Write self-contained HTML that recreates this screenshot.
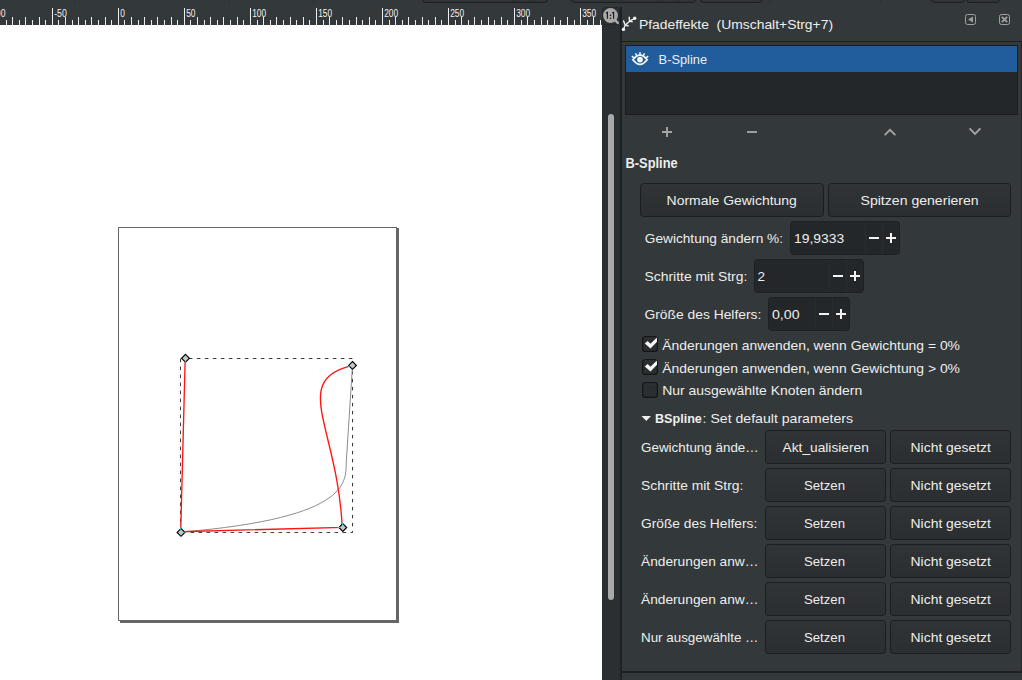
<!DOCTYPE html><html><head><meta charset="utf-8"><style>html,body{margin:0;padding:0;width:1022px;height:680px;overflow:hidden;background:#33383a}svg{display:block}text{font-family:"Liberation Sans",sans-serif}</style></head><body><svg width="1022" height="680" viewBox="0 0 1022 680"><defs><linearGradient id="bg" x1="0" y1="0" x2="0" y2="1"><stop offset="0" stop-color="#303436"/><stop offset="1" stop-color="#2a2e30"/></linearGradient><linearGradient id="cb" x1="0" y1="0" x2="0" y2="1"><stop offset="0" stop-color="#2f3335"/><stop offset="1" stop-color="#272b2d"/></linearGradient></defs><rect x="0" y="0" width="1022" height="680" fill="#33383a"/>
<rect x="0" y="25" width="602" height="655" fill="#ffffff"/>
<rect x="120" y="228" width="279" height="395" fill="#666666"/>
<rect x="118.5" y="227.5" width="278" height="393" fill="#ffffff" stroke="#666666" stroke-width="1"/>
<rect x="180.5" y="358.5" width="172" height="174" fill="none" stroke="#3a3a3a" stroke-width="1" stroke-dasharray="3.5 4.5" stroke-dashoffset="-0.4"/>
<path d="M352.5 365.4 L346.4 460 C345.1 480.2 355.9 517.5 181 532.1" fill="none" stroke="#8c8c8c" stroke-width="1"/>
<path d="M185.2 358.3 L180.7 531.7 L342.2 527.3 C337.6 426.3 289.7 380.6 352.5 365.4" fill="none" stroke="#ff1414" stroke-width="1.35"/>
<path d="M185.5 354.40000000000003 L189.4 358.3 L185.5 362.2 L181.6 358.3 Z" fill="#c6c6c6" stroke="#000" stroke-width="1.15"/>
<path d="M185.29 361.09 L185.13 363.29" stroke="#10d8e0" stroke-width="1.1"/>
<path d="M352.5 361.5 L356.4 365.4 L352.5 369.29999999999995 L348.6 365.4 Z" fill="#c6c6c6" stroke="#000" stroke-width="1.15"/>
<path d="M349.77 366.01 L347.62 366.50" stroke="#10d8e0" stroke-width="1.1"/>
<path d="M342.8 523.6 L346.7 527.5 L342.8 531.4 L338.90000000000003 527.5 Z" fill="#c6c6c6" stroke="#000" stroke-width="1.15"/>
<path d="M340.00 527.50 L337.80 527.50" stroke="#10d8e0" stroke-width="1.1"/>
<path d="M342.52 524.71 L342.30 522.52" stroke="#10d8e0" stroke-width="1.1"/>
<path d="M181 528.5 L184.9 532.4 L181 536.3 L177.1 532.4 Z" fill="#c6c6c6" stroke="#000" stroke-width="1.15"/>
<path d="M180.72 529.61 L180.50 527.42" stroke="#10d8e0" stroke-width="1.1"/>
<path d="M183.79 532.19 L185.99 532.03" stroke="#10d8e0" stroke-width="1.1"/>
<rect x="422.5" y="-6.5" width="125" height="9" rx="3" fill="#2f3335" stroke="#1d2022"/>
<rect x="571.5" y="-6.5" width="124" height="9" rx="3" fill="#2f3335" stroke="#1d2022"/>
<rect x="700.5" y="-6.5" width="62" height="9" rx="3" fill="#2f3335" stroke="#1d2022"/>
<rect x="931.5" y="-6.5" width="33" height="9" rx="3" fill="#2f3335" stroke="#1d2022"/>
<rect x="966.5" y="-6.5" width="33" height="9" rx="3" fill="#2f3335" stroke="#1d2022"/>
<path d="M74.5 0V3M229.5 0V3M313.5 0V3M769.5 0V3M880.5 0V3" stroke="#2c3032"/><path d="M513.5 0V2M530.5 0V2M661.5 0V2M678.5 0V2" stroke="#24282a"/>
<rect x="0" y="3" width="602" height="22" fill="#33383a"/>
<text x="-11.8" y="17" font-size="10.2" textLength="17.25" lengthAdjust="spacingAndGlyphs" fill="#f2f2f2" >-100</text>
<text x="54.2" y="17" font-size="10.2" textLength="12.600000000000001" lengthAdjust="spacingAndGlyphs" fill="#f2f2f2" >-50</text>
<text x="120.2" y="17" font-size="10.2" textLength="4.65" lengthAdjust="spacingAndGlyphs" fill="#f2f2f2" >0</text>
<text x="186.2" y="17" font-size="10.2" textLength="9.3" lengthAdjust="spacingAndGlyphs" fill="#f2f2f2" >50</text>
<text x="252.2" y="17" font-size="10.2" textLength="13.950000000000001" lengthAdjust="spacingAndGlyphs" fill="#f2f2f2" >100</text>
<text x="318.2" y="17" font-size="10.2" textLength="13.950000000000001" lengthAdjust="spacingAndGlyphs" fill="#f2f2f2" >150</text>
<text x="384.2" y="17" font-size="10.2" textLength="13.950000000000001" lengthAdjust="spacingAndGlyphs" fill="#f2f2f2" >200</text>
<text x="450.2" y="17" font-size="10.2" textLength="13.950000000000001" lengthAdjust="spacingAndGlyphs" fill="#f2f2f2" >250</text>
<text x="516.2" y="17" font-size="10.2" textLength="13.950000000000001" lengthAdjust="spacingAndGlyphs" fill="#f2f2f2" >300</text>
<text x="582.2" y="17" font-size="10.2" textLength="13.950000000000001" lengthAdjust="spacingAndGlyphs" fill="#f2f2f2" >350</text>
<path d="M-13.5 8V25 M-7.5 20V25 M-0.5 17V25 M6.5 20V25 M12.5 17V25 M19.5 20V25 M25.5 17V25 M32.5 20V25 M39.5 17V25 M45.5 20V25 M52.5 8V25 M58.5 20V25 M65.5 17V25 M72.5 20V25 M78.5 17V25 M85.5 20V25 M91.5 17V25 M98.5 20V25 M105.5 17V25 M111.5 20V25 M118.5 8V25 M124.5 20V25 M131.5 17V25 M138.5 20V25 M144.5 17V25 M151.5 20V25 M157.5 17V25 M164.5 20V25 M171.5 17V25 M177.5 20V25 M184.5 8V25 M190.5 20V25 M197.5 17V25 M204.5 20V25 M210.5 17V25 M217.5 20V25 M223.5 17V25 M230.5 20V25 M237.5 17V25 M243.5 20V25 M250.5 8V25 M257.5 20V25 M263.5 17V25 M270.5 20V25 M276.5 17V25 M283.5 20V25 M290.5 17V25 M296.5 20V25 M303.5 17V25 M309.5 20V25 M316.5 8V25 M323.5 20V25 M329.5 17V25 M336.5 20V25 M342.5 17V25 M349.5 20V25 M356.5 17V25 M362.5 20V25 M369.5 17V25 M375.5 20V25 M382.5 8V25 M389.5 20V25 M395.5 17V25 M402.5 20V25 M408.5 17V25 M415.5 20V25 M422.5 17V25 M428.5 20V25 M435.5 17V25 M441.5 20V25 M448.5 8V25 M455.5 20V25 M461.5 17V25 M468.5 20V25 M474.5 17V25 M481.5 20V25 M488.5 17V25 M494.5 20V25 M501.5 17V25 M507.5 20V25 M514.5 8V25 M521.5 20V25 M527.5 17V25 M534.5 20V25 M541.5 17V25 M547.5 20V25 M554.5 17V25 M560.5 20V25 M567.5 17V25 M574.5 20V25 M580.5 8V25 M587.5 20V25 M593.5 17V25 M600.5 20V25" stroke="#eeeeec" stroke-width="1"/>
<rect x="602" y="25" width="18" height="655" fill="#2b2f31"/>
<rect x="602" y="25" width="1" height="655" fill="#262a2c"/>
<rect x="608" y="114" width="6" height="486" rx="3" fill="#a8aaaa"/>
<rect x="602.5" y="7.5" width="17" height="17" rx="2" fill="#2b2f31" stroke="#24282a"/>
<circle cx="610.5" cy="15.5" r="7.4" fill="#a9a9a9"/>
<path d="M615 20 L617.8 22.8" stroke="#a9a9a9" stroke-width="2.6" stroke-linecap="round"/>
<path d="M606 12.9 L607.4 12.3 V18.7 M612.2 12.9 L613.6 12.3 V18.7" stroke="#141414" stroke-width="1.1" fill="none"/>
<rect x="609.9" y="14.7" width="1.3" height="1.3" fill="#141414"/><rect x="609.9" y="17.6" width="1.3" height="1.3" fill="#141414"/>
<rect x="620" y="7" width="2" height="673" fill="#1e2123"/>
<rect x="622" y="41" width="400" height="1" fill="#1d2022"/>
<rect x="1021" y="42" width="1" height="629" fill="#24282a"/>
<rect x="622" y="671" width="400" height="2" fill="#1d2022"/>
<g stroke="#f2f2f2" fill="none" stroke-linecap="round"><path d="M623.4 29.4 Q625.5 22.5 634.7 18.3" stroke-width="1.3"/><path d="M623.6 21 L625.2 25.2 L628.2 25.8 M629.2 17.3 L629.6 21 L632.2 21.8" stroke-width="1.4"/></g><circle cx="623.4" cy="29.4" r="1.7" fill="#f2f2f2"/><circle cx="634.7" cy="18.3" r="1.7" fill="#f2f2f2"/>
<text x="639" y="29" font-size="13.5" textLength="194" lengthAdjust="spacingAndGlyphs" fill="#eeeeec" >Pfadeffekte  (Umschalt+Strg+7)</text>
<rect x="965.5" y="14.5" width="10" height="10" rx="2" fill="none" stroke="#a0a0a0" stroke-width="1"/>
<path d="M968 19.5 L973 16.5 L973 22.5 Z" fill="#a0a0a0"/>
<rect x="999.5" y="14.5" width="10" height="10" rx="2" fill="none" stroke="#a0a0a0" stroke-width="1"/>
<path d="M1001.8 16.8 L1007.2 22.2 M1007.2 16.8 L1001.8 22.2" stroke="#a0a0a0" stroke-width="1.8"/>
<rect x="625.5" y="45.5" width="392" height="69" fill="#232729" stroke="#1b1e1e"/>
<rect x="626" y="46" width="391" height="26" fill="#215d9c"/>
<g fill="none" stroke="#f4f4f0"><path d="M632.9 59.8 Q640 50.6 647.1 59.8 Q640 69 632.9 59.8 Z" stroke-width="1.8"/><path d="M634.32 58.14 L631.78 56.20 M636.88 56.09 L635.47 53.21 M640.00 55.20 L640.00 52.00 M643.12 56.09 L644.53 53.21 M645.68 58.14 L648.22 56.20 " stroke-width="1.5"/></g><circle cx="640" cy="59.6" r="2.9" fill="#f4f4f0"/>
<text x="658.6" y="64" font-size="13.5" textLength="48.5" lengthAdjust="spacingAndGlyphs" fill="#eeeeec" >B-Spline</text>
<g stroke="#a4a4a4" stroke-width="1.9" fill="none"><path d="M662 132H672M667 127V137"/><path d="M747 132H757"/><path d="M884.6 135.2L890 129.8L895.4 135.2"/><path d="M969.6 128.4L975 133.8L980.4 128.4"/></g>
<text x="625.6" y="167.6" font-size="14.5" font-weight="bold" textLength="52" lengthAdjust="spacingAndGlyphs" fill="#eeeeec" >B-Spline</text>
<rect x="640.5" y="183.5" width="183" height="33" rx="3" fill="url(#bg)" stroke="#1b1e1f"/>
<text x="666.6" y="205.2" font-size="13.5" textLength="130.2" lengthAdjust="spacingAndGlyphs" fill="#eeeeec" >Normale Gewichtung</text>
<rect x="828.5" y="183.5" width="182" height="33" rx="3" fill="url(#bg)" stroke="#1b1e1f"/>
<text x="860.5" y="205.2" font-size="13.5" textLength="118.2" lengthAdjust="spacingAndGlyphs" fill="#eeeeec" >Spitzen generieren</text>
<text x="644.8" y="243" font-size="13.5" textLength="138.2" lengthAdjust="spacingAndGlyphs" fill="#eeeeec" >Gewichtung ändern %:</text>
<rect x="790.5" y="221.5" width="109" height="33" rx="3" fill="#232729" stroke="#1e2123"/>
<rect x="865" y="222" width="1" height="32" fill="#282c2e"/>
<rect x="882" y="222" width="1" height="32" fill="#282c2e"/>
<path d="M869 238.0H879M886 238.0H896M891 233.0V243.0" stroke="#f2f2f2" stroke-width="2"/>
<text x="794" y="243" font-size="13.5" textLength="50.2" lengthAdjust="spacingAndGlyphs" fill="#eeeeec" >19,9333</text>
<text x="644.4" y="281" font-size="13.5" textLength="103" lengthAdjust="spacingAndGlyphs" fill="#eeeeec" >Schritte mit Strg:</text>
<rect x="754.5" y="259.5" width="109" height="33" rx="3" fill="#232729" stroke="#1e2123"/>
<rect x="829" y="260" width="1" height="32" fill="#282c2e"/>
<rect x="846" y="260" width="1" height="32" fill="#282c2e"/>
<path d="M833 276.0H843M850 276.0H860M855 271.0V281.0" stroke="#f2f2f2" stroke-width="2"/>
<text x="757.5" y="281" font-size="13.5" textLength="7.5" lengthAdjust="spacingAndGlyphs" fill="#eeeeec" >2</text>
<text x="644.4" y="319" font-size="13.5" textLength="117" lengthAdjust="spacingAndGlyphs" fill="#eeeeec" >Größe des Helfers:</text>
<rect x="768.5" y="297.5" width="81" height="33" rx="3" fill="#232729" stroke="#1e2123"/>
<rect x="815" y="298" width="1" height="32" fill="#282c2e"/>
<rect x="832" y="298" width="1" height="32" fill="#282c2e"/>
<path d="M819 314.0H829M836 314.0H846M841 309.0V319.0" stroke="#f2f2f2" stroke-width="2"/>
<text x="772" y="319" font-size="13.5" textLength="27.5" lengthAdjust="spacingAndGlyphs" fill="#eeeeec" >0,00</text>
<rect x="642.6" y="336.6" width="14.8" height="14.8" rx="3" fill="#2a2e30" stroke="#141617" stroke-width="1.2"/>
<rect x="644" y="337.5" width="12" height="1" fill="#303436"/>
<path d="M644.80 343.60 L647.60 340.90 L650.50 343.70 L656.90 337.60 L657.00 341.70 L650.50 348.60 Z" fill="#f6f6f6"/>
<text x="662.2" y="349.9" font-size="13.5" textLength="297.8" lengthAdjust="spacingAndGlyphs" fill="#eeeeec" >Änderungen anwenden, wenn Gewichtung = 0%</text>
<rect x="642.6" y="359.6" width="14.8" height="14.8" rx="3" fill="#2a2e30" stroke="#141617" stroke-width="1.2"/>
<rect x="644" y="360.5" width="12" height="1" fill="#303436"/>
<path d="M644.80 366.60 L647.60 363.90 L650.50 366.70 L656.90 360.60 L657.00 364.70 L650.50 371.60 Z" fill="#f6f6f6"/>
<text x="662.2" y="372.6" font-size="13.5" textLength="297.8" lengthAdjust="spacingAndGlyphs" fill="#eeeeec" >Änderungen anwenden, wenn Gewichtung &gt; 0%</text>
<rect x="642.6" y="382.6" width="14.8" height="14.8" rx="3" fill="#2a2e30" stroke="#141617" stroke-width="1.2"/>
<rect x="644" y="383.5" width="12" height="1" fill="#303436"/>
<text x="662.2" y="395.4" font-size="13.5" textLength="200" lengthAdjust="spacingAndGlyphs" fill="#eeeeec" >Nur ausgewählte Knoten ändern</text>
<path d="M641.5 416 L651 416 L646.25 421 Z" fill="#eeeeec"/>
<text x="654.9" y="423.4" font-size="13.5" font-weight="bold" textLength="47" lengthAdjust="spacingAndGlyphs" fill="#eeeeec" >BSpline</text>
<text x="702.6" y="423.4" font-size="13.5" textLength="150.4" lengthAdjust="spacingAndGlyphs" fill="#eeeeec" >: Set default parameters</text>
<text x="641" y="451.8" font-size="13.5" textLength="117.7" lengthAdjust="spacingAndGlyphs" fill="#eeeeec" >Gewichtung ände…</text>
<rect x="765.5" y="430.5" width="120" height="33" rx="3" fill="url(#bg)" stroke="#1b1e1f"/>
<text x="782.6" y="451.8" font-size="13.5" textLength="86.2" lengthAdjust="spacingAndGlyphs" fill="#eeeeec" >Akt_ualisieren</text>
<rect x="890.5" y="430.5" width="120" height="33" rx="3" fill="url(#bg)" stroke="#1b1e1f"/>
<text x="910.6" y="451.8" font-size="13.5" textLength="80.3" lengthAdjust="spacingAndGlyphs" fill="#eeeeec" >Nicht gesetzt</text>
<text x="641" y="489.8" font-size="13.5" textLength="102.3" lengthAdjust="spacingAndGlyphs" fill="#eeeeec" >Schritte mit Strg:</text>
<rect x="765.5" y="468.5" width="120" height="33" rx="3" fill="url(#bg)" stroke="#1b1e1f"/>
<text x="804" y="489.8" font-size="13.5" textLength="41" lengthAdjust="spacingAndGlyphs" fill="#eeeeec" >Setzen</text>
<rect x="890.5" y="468.5" width="120" height="33" rx="3" fill="url(#bg)" stroke="#1b1e1f"/>
<text x="910.6" y="489.8" font-size="13.5" textLength="80.3" lengthAdjust="spacingAndGlyphs" fill="#eeeeec" >Nicht gesetzt</text>
<text x="641" y="527.8" font-size="13.5" textLength="116.3" lengthAdjust="spacingAndGlyphs" fill="#eeeeec" >Größe des Helfers:</text>
<rect x="765.5" y="506.5" width="120" height="33" rx="3" fill="url(#bg)" stroke="#1b1e1f"/>
<text x="804" y="527.8" font-size="13.5" textLength="41" lengthAdjust="spacingAndGlyphs" fill="#eeeeec" >Setzen</text>
<rect x="890.5" y="506.5" width="120" height="33" rx="3" fill="url(#bg)" stroke="#1b1e1f"/>
<text x="910.6" y="527.8" font-size="13.5" textLength="80.3" lengthAdjust="spacingAndGlyphs" fill="#eeeeec" >Nicht gesetzt</text>
<text x="641" y="565.8" font-size="13.5" textLength="117.5" lengthAdjust="spacingAndGlyphs" fill="#eeeeec" >Änderungen anw…</text>
<rect x="765.5" y="544.5" width="120" height="33" rx="3" fill="url(#bg)" stroke="#1b1e1f"/>
<text x="804" y="565.8" font-size="13.5" textLength="41" lengthAdjust="spacingAndGlyphs" fill="#eeeeec" >Setzen</text>
<rect x="890.5" y="544.5" width="120" height="33" rx="3" fill="url(#bg)" stroke="#1b1e1f"/>
<text x="910.6" y="565.8" font-size="13.5" textLength="80.3" lengthAdjust="spacingAndGlyphs" fill="#eeeeec" >Nicht gesetzt</text>
<text x="641" y="603.8" font-size="13.5" textLength="117.5" lengthAdjust="spacingAndGlyphs" fill="#eeeeec" >Änderungen anw…</text>
<rect x="765.5" y="582.5" width="120" height="33" rx="3" fill="url(#bg)" stroke="#1b1e1f"/>
<text x="804" y="603.8" font-size="13.5" textLength="41" lengthAdjust="spacingAndGlyphs" fill="#eeeeec" >Setzen</text>
<rect x="890.5" y="582.5" width="120" height="33" rx="3" fill="url(#bg)" stroke="#1b1e1f"/>
<text x="910.6" y="603.8" font-size="13.5" textLength="80.3" lengthAdjust="spacingAndGlyphs" fill="#eeeeec" >Nicht gesetzt</text>
<text x="641" y="641.8" font-size="13.5" textLength="117.5" lengthAdjust="spacingAndGlyphs" fill="#eeeeec" >Nur ausgewählte …</text>
<rect x="765.5" y="620.5" width="120" height="33" rx="3" fill="url(#bg)" stroke="#1b1e1f"/>
<text x="804" y="641.8" font-size="13.5" textLength="41" lengthAdjust="spacingAndGlyphs" fill="#eeeeec" >Setzen</text>
<rect x="890.5" y="620.5" width="120" height="33" rx="3" fill="url(#bg)" stroke="#1b1e1f"/>
<text x="910.6" y="641.8" font-size="13.5" textLength="80.3" lengthAdjust="spacingAndGlyphs" fill="#eeeeec" >Nicht gesetzt</text></svg></body></html>
